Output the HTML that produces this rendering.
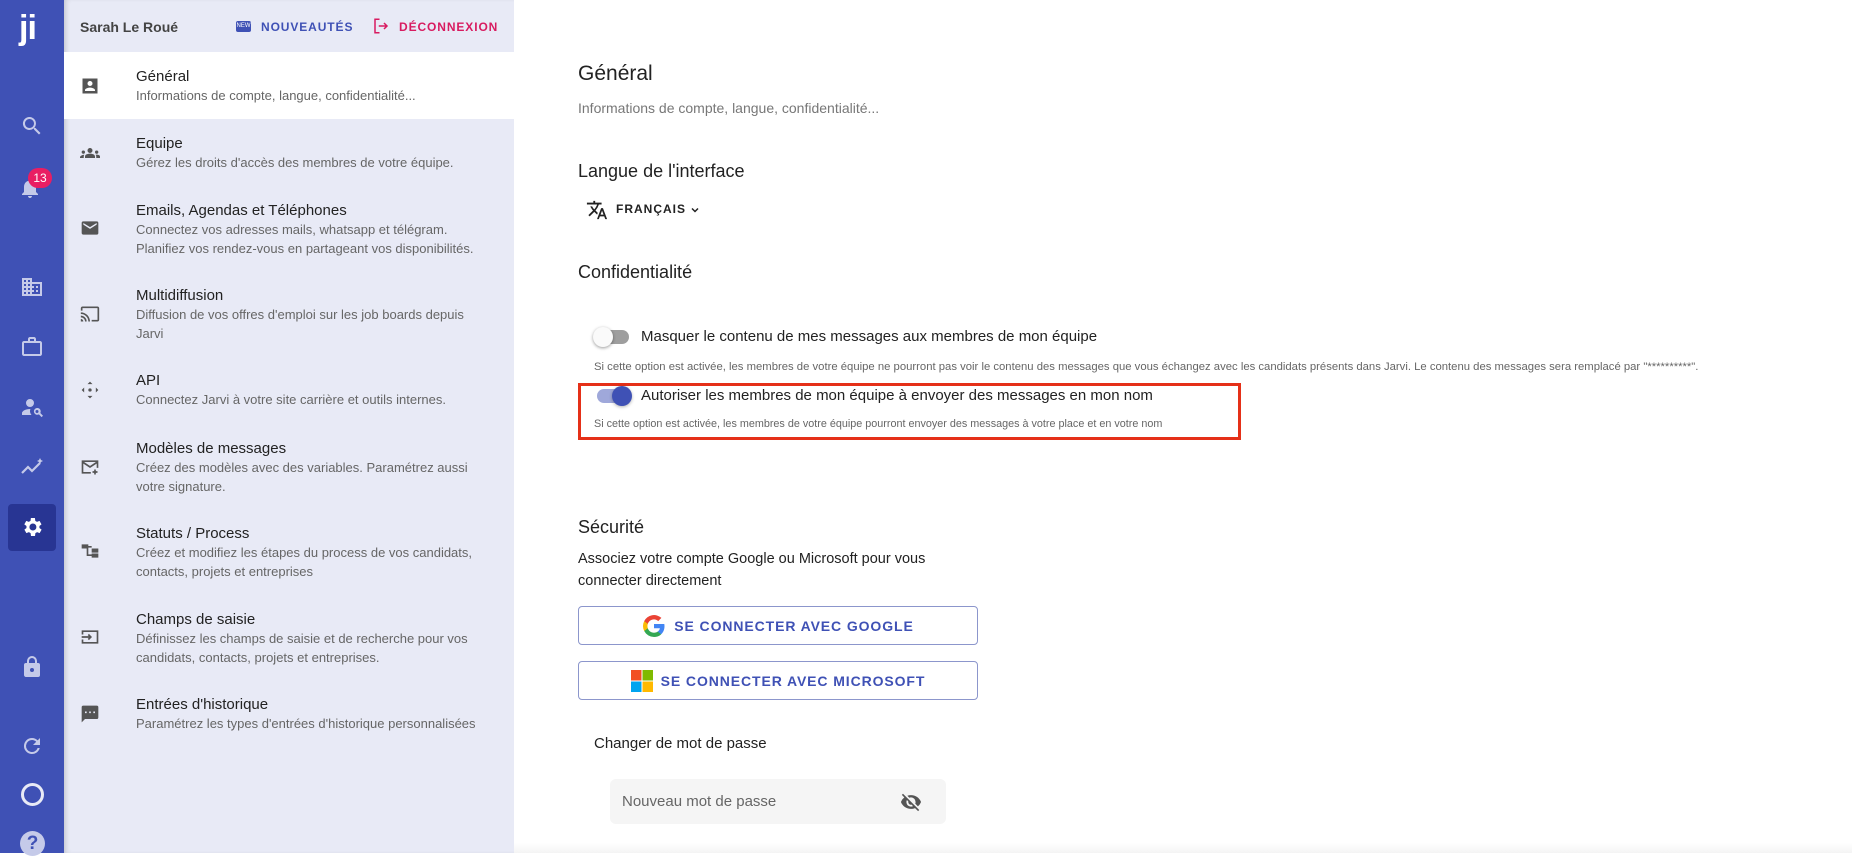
<!DOCTYPE html>
<html><head><meta charset="utf-8"><style>
*{margin:0;padding:0;box-sizing:border-box}
body{width:1852px;height:853px;overflow:hidden;background:#fff;font-family:"Liberation Sans",sans-serif;position:relative;color:#212121}
.a{position:absolute;white-space:nowrap}
#side{position:absolute;left:0;top:0;width:64px;height:853px;background:#3f51b5}
#menu{position:absolute;left:64px;top:0;width:450px;height:853px;background:#e8eaf6;box-shadow:inset 4px 0 6px -3px rgba(0,0,0,.2)}
.si{position:absolute;left:20px;width:24px;height:24px}
.t{font-size:15px;color:#222}
.d{font-size:13px;color:#666;line-height:19px}
.mi{position:absolute;left:80px;width:20px;height:20px}
.h{font-size:21px;color:#222}
.btn{position:absolute;left:578px;width:400px;height:39px;border:1px solid #8c96cc;border-radius:4px;color:#3f51b5;font-size:14px;font-weight:bold;letter-spacing:0.9px;display:flex;align-items:center;justify-content:center;gap:8px}
</style></head><body>
<div id="side">
 <div class="a" style="left:19px;top:9px;color:#fff;font-size:34px;font-weight:bold;letter-spacing:-1px">ji</div>
 <svg class="si" style="top:114px" viewBox="0 0 24 24"><path fill="#c5cae9" d="M15.5 14h-.8l-.3-.3A6.5 6.5 0 1 0 9.5 16a6.5 6.5 0 0 0 4.2-1.6l.3.3v.8l5 5 1.5-1.5-5-5zm-6 0C7 14 5 12 5 9.5S7 5 9.5 5 14 7 14 9.5 12 14 9.5 14z"/></svg>
 <svg class="si" style="top:176px;left:18px" viewBox="0 0 24 24"><path fill="#c5cae9" d="M12 22c1.1 0 2-.9 2-2h-4c0 1.1.9 2 2 2zm6-6v-5c0-3.1-1.6-5.6-4.5-6.3V4a1.5 1.5 0 0 0-3 0v.7C7.6 5.4 6 7.9 6 11v5l-2 2v1h16v-1l-2-2z"/></svg>
 <div class="a" style="left:28px;top:168px;width:24px;height:20px;border-radius:10px;background:#e91e63;color:#fff;font-size:12px;text-align:center;line-height:20px">13</div>
 <svg class="si" style="top:275px" viewBox="0 0 24 24"><path fill="#c5cae9" d="M12 7V3H2v18h20V7H12zM6 19H4v-2h2v2zm0-4H4v-2h2v2zm0-4H4V9h2v2zm0-4H4V5h2v2zm4 12H8v-2h2v2zm0-4H8v-2h2v2zm0-4H8V9h2v2zm0-4H8V5h2v2zm10 12h-8v-2h2v-2h-2v-2h2v-2h-2V9h8v10zm-2-8h-2v2h2v-2zm0 4h-2v2h2v-2z"/></svg>
 <svg class="si" style="top:335px" viewBox="0 0 24 24"><path fill="#c5cae9" d="M14 6V4h-4v2h4zM4 8v11h16V8H4zm16-2c1.1 0 2 .9 2 2v11c0 1.1-.9 2-2 2H4c-1.1 0-2-.9-2-2l.01-11c0-1.1.88-2 1.99-2h4V4c0-1.1.89-2 2-2h4c1.1 0 2 .9 2 2v2h4z"/></svg>
 <svg class="si" style="top:395px" viewBox="0 0 24 24"><path fill="#c5cae9" d="M10 12a4 4 0 1 0 0-8 4 4 0 0 0 0 8zm.4 2C6 13.8 2 16 2 18v2h9.5a6 6 0 0 1-1.1-6zm9.9 4a3.4 3.4 0 1 0-1.4 1.4l2.7 2.7 1.4-1.4-2.7-2.7zM17 18a1.5 1.5 0 1 1 0-3 1.5 1.5 0 0 1 0 3z"/></svg>
 <svg class="si" style="top:456px" viewBox="0 0 24 24"><path fill="none" stroke="#c5cae9" stroke-width="2.2" d="M2 17l6-6 4 4 8-8"/><path fill="#c5cae9" d="M20 2l1 2 2 1-2 1-1 2-1-2-2-1 2-1z"/></svg>
 <div class="a" style="left:8px;top:504px;width:48px;height:47px;background:#283593;border-radius:4px"></div>
 <svg class="si" style="top:515px" viewBox="0 0 24 24"><path fill="#fff" d="M19.4 13a7.5 7.5 0 0 0 0-2l2.1-1.6-2-3.5-2.5 1a7.6 7.6 0 0 0-1.7-1L14.9 3h-4l-.4 2.9c-.6.3-1.2.6-1.7 1l-2.5-1-2 3.5L6.5 11a7.5 7.5 0 0 0 0 2l-2.1 1.6 2 3.5 2.5-1c.5.4 1.1.7 1.7 1l.4 2.9h4l.4-2.9c.6-.3 1.2-.6 1.7-1l2.5 1 2-3.5-2.2-1.6zM12.9 15.5a3.5 3.5 0 1 1 0-7 3.5 3.5 0 0 1 0 7z"/></svg>
 <svg class="si" style="top:655px" viewBox="0 0 24 24"><path fill="#c5cae9" d="M18 8h-1V6A5 5 0 0 0 7 6v2H6a2 2 0 0 0-2 2v10c0 1.1.9 2 2 2h12a2 2 0 0 0 2-2V10a2 2 0 0 0-2-2zm-6 9a2 2 0 1 1 0-4 2 2 0 0 1 0 4zM9 8V6a3 3 0 0 1 6 0v2H9z"/></svg>
 <svg class="si" style="top:734px" viewBox="0 0 24 24"><path fill="#c5cae9" d="M17.650 6.35A7.96 7.96 0 0 0 12 4a8 8 0 1 0 7.73 10h-2.08A6 6 0 1 1 12 6c1.66 0 3.14.69 4.22 1.78L13 11h7V4l-2.35 2.35z"/></svg>
 <div class="a" style="left:21px;top:783px;width:23px;height:23px;border:3px solid #e8eaf6;border-radius:50%"></div>
 <div class="a" style="left:20px;top:831px;width:25px;height:25px;border-radius:50%;background:#c5cae9;color:#3f51b5;font-weight:bold;font-size:19px;text-align:center;line-height:25px">?</div>
</div>
<div id="menu">
 <div class="a" style="left:16px;top:19px;font-size:14px;font-weight:bold;color:#444">Sarah Le Roué</div>
 <div class="a" style="left:172px;top:21px;width:15px;height:11px;background:#3f51b5;border-radius:2px;color:#fff;font-size:6px;line-height:11px;text-align:center">NEW</div>
 <div class="a" style="left:197px;top:20px;font-size:12px;font-weight:bold;letter-spacing:0.9px;color:#3f51b5">NOUVEAUTÉS</div>
 <svg class="a" style="left:308px;top:17px" width="18" height="18" viewBox="0 0 24 24"><path fill="none" stroke="#d81b60" stroke-width="2" d="M10 3H4v18h6M9 12h11M16 8l4 4-4 4"/></svg>
 <div class="a" style="left:335px;top:20px;font-size:12px;font-weight:bold;letter-spacing:0.9px;color:#d81b60">DÉCONNEXION</div>
 <div class="a" style="left:0;top:52px;width:450px;height:67px;background:#fff"></div>
</div>
<svg class="mi" style="top:76px" viewBox="0 0 24 24"><path fill="#555" d="M3 3h18v18H3zM12 6a3 3 0 1 0 0 6 3 3 0 0 0 0-6zm-6 12h12v-1c0-2-4-3-6-3s-6 1-6 3z"/></svg>
<div class="a t" style="left:136px;top:68px">Général</div><div class="a d" style="left:136px;top:86px">Informations de compte, langue, confidentialité...</div>
<svg class="mi" style="top:143px" viewBox="0 0 24 24"><path fill="#555" d="M12 12.75c1.63 0 3.070.39 4.24.9 1.08.48 1.76 1.56 1.76 2.73V18H6v-1.61c0-1.18.68-2.26 1.76-2.73A10.3 10.3 0 0 1 12 12.75zM4 13a2 2 0 1 0 0-4 2 2 0 0 0 0 4zm1.13 1.1A6.98 6.98 0 0 0 0 16.43V18h4.5v-1.61c0-.83.23-1.61.63-2.29zM20 13a2 2 0 1 0 0-4 2 2 0 0 0 0 4zm4 3.43c0-.81-.48-1.53-1.22-1.85A6.950 6.950 0 0 0 18.87 14.1c.4.68.63 1.46.63 2.29V18H24v-1.57zM12 6a3 3 0 1 1 0 6 3 3 0 0 1 0-6z"/></svg>
<div class="a t" style="left:136px;top:135px">Equipe</div><div class="a d" style="left:136px;top:153px">Gérez les droits d'accès des membres de votre équipe.</div>
<svg class="mi" style="top:218px" viewBox="0 0 24 24"><path fill="#555" d="M20 4H4a2 2 0 0 0-2 2v12c0 1.1.9 2 2 2h16a2 2 0 0 0 2-2V6a2 2 0 0 0-2-2zm0 4l-8 5-8-5V6l8 5 8-5v2z"/></svg>
<div class="a t" style="left:136px;top:202px">Emails, Agendas et Téléphones</div><div class="a d" style="left:136px;top:220px">Connectez vos adresses mails, whatsapp et télégram.<br>Planifiez vos rendez-vous en partageant vos disponibilités.</div>
<svg class="mi" style="top:304px" viewBox="0 0 24 24"><path fill="#555" d="M21 3H3c-1.1 0-2 .9-2 2v3h2V5h18v14h-7v2h7c1.1 0 2-.9 2-2V5c0-1.1-.9-2-2-2zM1 18v3h3c0-1.66-1.34-3-3-3zm0-4v2a5 5 0 0 1 5 5h2c0-3.87-3.13-7-7-7zm0-4v2a9 9 0 0 1 9 9h2c0-6.08-4.93-11-11-11z"/></svg>
<div class="a t" style="left:136px;top:287px">Multidiffusion</div><div class="a d" style="left:136px;top:305px">Diffusion de vos offres d'emploi sur les job boards depuis<br>Jarvi</div>
<svg class="mi" style="top:380px" viewBox="0 0 24 24"><path fill="#555" d="M12 2l3 3h-6zM12 22l-3-3h6zM2 12l3-3v6zM22 12l-3 3V9zM12 10a2 2 0 1 1 0 4 2 2 0 0 1 0-4z"/></svg>
<div class="a t" style="left:136px;top:372px">API</div><div class="a d" style="left:136px;top:390px">Connectez Jarvi à votre site carrière et outils internes.</div>
<svg class="mi" style="top:457px" viewBox="0 0 24 24"><path fill="none" stroke="#555" stroke-width="2" d="M13 19H3V5h18v8M3 6l9 6 9-6M18 15v6M15 18h6"/></svg>
<div class="a t" style="left:136px;top:440px">Modèles de messages</div><div class="a d" style="left:136px;top:458px">Créez des modèles avec des variables. Paramétrez aussi<br>votre signature.</div>
<svg class="mi" style="top:541px" viewBox="0 0 24 24"><path fill="#555" d="M2 4h8v5H2zM8 6h6v2h-4v8h4v2H8zM14 9h8v5h-8zM14 15h8v5h-8z"/></svg>
<div class="a t" style="left:136px;top:525px">Statuts / Process</div><div class="a d" style="left:136px;top:543px">Créez et modifiez les étapes du process de vos candidats,<br>contacts, projets et entreprises</div>
<svg class="mi" style="top:627px" viewBox="0 0 24 24"><path fill="none" stroke="#555" stroke-width="2" d="M3 9V5h18v14H3v-4M2 12h11M10 9l3 3-3 3"/></svg>
<div class="a t" style="left:136px;top:611px">Champs de saisie</div><div class="a d" style="left:136px;top:629px">Définissez les champs de saisie et de recherche pour vos<br>candidats, contacts, projets et entreprises.</div>
<svg class="mi" style="top:704px" viewBox="0 0 24 24"><path fill="#555" d="M20 2H4a2 2 0 0 0-2 2v18l4-4h14a2 2 0 0 0 2-2V4a2 2 0 0 0-2-2zM8 11H6V9h2zm5 0h-2V9h2zm5 0h-2V9h2z"/></svg>
<div class="a t" style="left:136px;top:696px">Entrées d'historique</div><div class="a d" style="left:136px;top:714px">Paramétrez les types d'entrées d'historique personnalisées</div>

<div class="a h" style="left:578px;top:62px">Général</div>
<div class="a" style="left:578px;top:100px;font-size:14px;color:#777">Informations de compte, langue, confidentialité...</div>
<div class="a" style="left:578px;top:161px;font-size:18px;color:#222">Langue de l'interface</div>
<svg class="a" style="left:586px;top:199px" width="22" height="22" viewBox="0 0 24 24"><path fill="#222" d="M12.87 15.07l-2.54-2.51.03-.03A17.5 17.5 0 0 0 14.07 6H17V4h-7V2H8v2H1v2h11.17C11.5 7.92 10.44 9.75 9 11.35 8.07 10.32 7.3 9.19 6.69 8h-2c.73 1.63 1.73 3.17 2.98 4.56l-5.09 5.02L4 19l5-5 3.11 3.11.76-2.04zM18.5 10h-2L12 22h2l1.12-3h4.75L21 22h2l-4.5-12zm-2.62 7l1.62-4.33L19.12 17h-3.24z"/></svg>
<div class="a" style="left:616px;top:202px;font-size:12px;font-weight:bold;letter-spacing:1px;color:#222">FRANÇAIS</div>
<svg class="a" style="left:690px;top:205px" width="10" height="10" viewBox="0 0 10 10"><path fill="none" stroke="#222" stroke-width="1.5" d="M2 3.5l3 3 3-3"/></svg>
<div class="a" style="left:578px;top:262px;font-size:18px;color:#222">Confidentialité</div>

<div class="a" style="left:597px;top:330px;width:32px;height:14px;border-radius:7px;background:#9e9e9e"></div>
<div class="a" style="left:593px;top:327px;width:20px;height:20px;border-radius:50%;background:#fafafa;box-shadow:0 1px 3px rgba(0,0,0,.4)"></div>
<div class="a" style="left:641px;top:328px;font-size:15px;color:#222">Masquer le contenu de mes messages aux membres de mon équipe</div>
<div class="a" style="left:594px;top:361px;font-size:11.3px;color:#666">Si cette option est activée, les membres de votre équipe ne pourront pas voir le contenu des messages que vous échangez avec les candidats présents dans Jarvi. Le contenu des messages sera remplacé par "**********".</div>

<div class="a" style="left:578px;top:383px;width:663px;height:57px;border:3px solid #e53018"></div>
<div class="a" style="left:597px;top:389px;width:32px;height:14px;border-radius:7px;background:#9fa8da"></div>
<div class="a" style="left:612px;top:386px;width:20px;height:20px;border-radius:50%;background:#3f51b5;box-shadow:0 1px 3px rgba(0,0,0,.3)"></div>
<div class="a" style="left:641px;top:387px;font-size:15px;color:#222">Autoriser les membres de mon équipe à envoyer des messages en mon nom</div>
<div class="a" style="left:594px;top:418px;font-size:10.8px;color:#666">Si cette option est activée, les membres de votre équipe pourront envoyer des messages à votre place et en votre nom</div>

<div class="a" style="left:578px;top:517px;font-size:18px;color:#222">Sécurité</div>
<div class="a" style="left:578px;top:548px;font-size:14.5px;color:#222;line-height:22px">Associez votre compte Google ou Microsoft pour vous<br>connecter directement</div>
<div class="btn" style="top:606px"><svg width="24" height="24" viewBox="0 0 24 24"><path fill="#4285f4" d="M22.5 12.2c0-.8-.1-1.5-.2-2.2H12v4.2h5.9a5 5 0 0 1-2.2 3.3v2.7h3.5c2.1-1.9 3.3-4.7 3.3-8z"/><path fill="#34a853" d="M12 23c3 0 5.5-1 7.2-2.7l-3.5-2.7c-1 .7-2.2 1.1-3.7 1.1-2.9 0-5.3-1.9-6.2-4.5H2.2v2.8A11 11 0 0 0 12 23z"/><path fill="#fbbc05" d="M5.8 14.2a6.6 6.6 0 0 1 0-4.3V7.1H2.2a11 11 0 0 0 0 9.9l3.6-2.8z"/><path fill="#ea4335" d="M12 5.4c1.6 0 3.1.6 4.2 1.7l3.2-3.2A11 11 0 0 0 2.2 7.1l3.6 2.8C6.7 7.3 9.1 5.4 12 5.4z"/></svg>SE CONNECTER AVEC GOOGLE</div>
<div class="btn" style="top:661px"><svg width="22" height="22" viewBox="0 0 22 22"><rect width="10.5" height="10.5" fill="#f25022"/><rect x="11.5" width="10.5" height="10.5" fill="#7fba00"/><rect y="11.5" width="10.5" height="10.5" fill="#00a4ef"/><rect x="11.5" y="11.5" width="10.5" height="10.5" fill="#ffb900"/></svg>SE CONNECTER AVEC MICROSOFT</div>
<div class="a" style="left:594px;top:735px;font-size:15px;color:#222">Changer de mot de passe</div>
<div class="a" style="left:610px;top:779px;width:336px;height:45px;background:#f5f5f5;border-radius:6px"></div>
<div class="a" style="left:622px;top:793px;font-size:15px;color:#666">Nouveau mot de passe</div>
<svg class="a" style="left:900px;top:791px" width="22" height="22" viewBox="0 0 24 24"><path fill="#555" d="M12 7a5 5 0 0 1 5 5c0 .65-.13 1.26-.36 1.83l2.92 2.92A11.8 11.8 0 0 0 22.99 12C21.27 7.61 17 4.5 12 4.5c-1.4 0-2.74.25-3.98.7l2.16 2.16C10.74 7.13 11.35 7 12 7zM2 4.27l2.28 2.28.46.46A11.8 11.8 0 0 0 1 12c1.73 4.39 6 7.5 11 7.5 1.55 0 3.03-.3 4.38-.84l.42.42L19.73 22 21 20.73 3.27 3 2 4.27zM7.53 9.8l1.55 1.55c-.05.21-.08.43-.08.65a3 3 0 0 0 3 3c.22 0 .44-.03.65-.08l1.55 1.55A4.97 4.97 0 0 1 7 12c0-.79.2-1.53.53-2.2z"/></svg>
<div class="a" style="left:514px;top:843px;width:1338px;height:10px;background:linear-gradient(#fff,#f4f4f4)"></div>
</body></html>
